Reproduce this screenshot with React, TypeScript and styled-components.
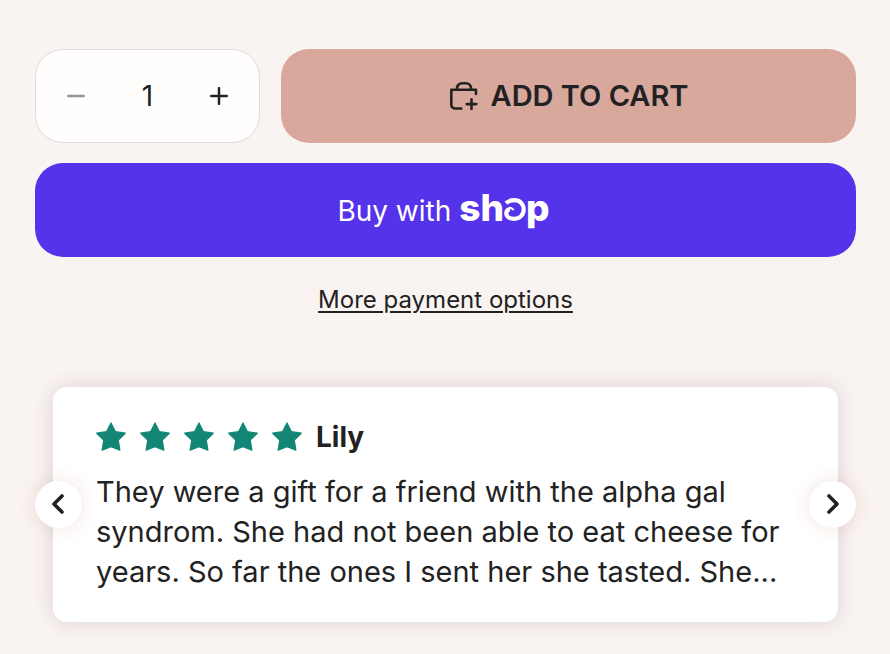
import React, { useState } from "react";
import styled, { createGlobalStyle } from "styled-components";

const ink = "#222222";

const GlobalStyle = createGlobalStyle`
  *, *::before, *::after { box-sizing: border-box; }
  body {
    margin: 0;
    background: #f9f3f1;
    color: ${ink};
    font-family: Inter, "Liberation Sans", sans-serif;
  }
  button, input { font: inherit; color: inherit; }
  button { border: 0; padding: 0; background: none; cursor: pointer; }
`;

const Page = styled.main`
  display: flex;
  flex-direction: column;
  padding: 49px 34px 32px 35px;
`;

const PurchaseForm = styled.form`
  display: flex;
  flex-wrap: wrap;
  gap: 20px 21px;
`;

const Quantity = styled.div`
  display: flex;
  align-items: center;
  width: 225px;
  height: 94px;
  border: 1px solid #dedadd;
  border-radius: 28px;
  background: #fffefd;
`;

const StepButton = styled.button`
  display: grid;
  place-items: center;
  flex: 0 0 80px;
  height: 100%;
  &:disabled { color: #999696; cursor: default; }
`;

const QuantityInput = styled.input`
  flex: 1;
  min-width: 0;
  border: 0;
  padding: 0;
  background: none;
  text-align: center;
  font-size: 28px;
  outline: none;
`;

const ActionButton = styled.button<{ $tone: "cart" | "shop" }>`
  display: flex;
  align-items: center;
  justify-content: center;
  flex: 1 0 ${(p) => (p.$tone === "shop" ? "100%" : "0")};
  height: 94px;
  gap: ${(p) => (p.$tone === "shop" ? "8px" : "12px")};
  padding-right: ${(p) => (p.$tone === "shop" ? "4px" : "0")};
  border-radius: 28px;
  background: ${(p) => (p.$tone === "shop" ? "#5433eb" : "#d9a89d")};
  color: ${(p) => (p.$tone === "shop" ? "#ffffff" : ink)};
  font-size: ${(p) => (p.$tone === "shop" ? "28px" : "29px")};
  font-weight: ${(p) => (p.$tone === "shop" ? 400 : 600)};
  line-height: 36px;
  white-space: nowrap;
`;

const ShopLabel = styled.span`
  line-height: 36px;
  padding-top: 2px;
`;

const Wordmark = styled.span`
  display: flex;
  align-items: baseline;
  padding-bottom: 5px;
  font-size: 37px;
  line-height: 44px;
  font-weight: 800;
`;

const MoreOptions = styled.a`
  align-self: center;
  margin-top: 27px;
  color: ${ink};
  font-size: 24px;
  line-height: 32px;
  text-decoration: underline;
  text-decoration-thickness: 2px;
  text-underline-offset: 3px;
`;

const Carousel = styled.section`
  position: relative;
  margin-top: 71px;
  padding: 0 18px;
`;

const ReviewCard = styled.article`
  padding: 32px 43px 30px;
  border-radius: 14px;
  background: #ffffff;
  box-shadow: 0 0 20px rgba(70, 45, 80, 0.16);
`;

const ReviewHeader = styled.header`
  display: flex;
  align-items: center;
  gap: 14px;
  height: 36px;
`;

const Stars = styled.div`
  display: flex;
  gap: 14px;
`;

const Reviewer = styled.h3`
  margin: 0;
  font-size: 28px;
  line-height: 36px;
  font-weight: 700;
`;

const ReviewText = styled.p`
  margin: 17px 0 0;
  font-size: 29px;
  line-height: 40px;
`;

const ReviewLine = styled.span`
  display: block;
`;

const ArrowButton = styled.button<{ $side: "left" | "right" }>`
  position: absolute;
  top: 50%;
  ${(p) => p.$side}: 0;
  display: grid;
  place-items: center;
  width: 47px;
  height: 47px;
  margin-top: -24px;
  border-radius: 50%;
  background: #ffffff;
  box-shadow: 0 0 18px rgba(170, 80, 50, 0.16);
`;

const MinusIcon = () => (
  <svg width="18" height="18" viewBox="0 0 18 18" fill="none" stroke="currentColor" strokeWidth="2.5" strokeLinecap="round" aria-hidden="true">
    <path d="M1.2 9h15.6" />
  </svg>
);

const PlusIcon = () => (
  <svg width="18" height="18" viewBox="0 0 18 18" fill="none" stroke="currentColor" strokeWidth="2.5" strokeLinecap="round" aria-hidden="true">
    <path d="M1.2 9h15.6M9 1.2v15.6" />
  </svg>
);

const BagIcon = () => (
  <svg width="30" height="30" viewBox="0 0 30 30" fill="none" stroke="currentColor" strokeWidth="2.6" strokeLinecap="round" strokeLinejoin="round" aria-hidden="true">
    <path d="M27 13V8.8H2.3v14.7a4 4 0 0 0 4 4h6" />
    <path d="M8 8.8V7.3a5 5 0 0 1 5-5h4a5 5 0 0 1 5 5v1.5" />
    <path d="M22.5 18.3v9.6M17.7 23.1h9.6" />
  </svg>
);

const SwirlIcon = () => (
  <svg width="22" height="23" viewBox="0 0 22 23" fill="none" stroke="currentColor" aria-hidden="true">
    <path d="M2 5.2C4.200 3.100 7 2.200 10.400 2.200c5.600 0 9.300 4 9.300 9.300s-3.900 9.300-9.400 9.300c-4.800 0-8-2.300-8-5.600 0-2.500 1.600-4 3.800-4" strokeWidth="4.200" />
    <path d="M5.500 9.500c2 .2 3 1.300 4.300 2.500" strokeWidth="2" />
  </svg>
);

const StarIcon = () => (
  <svg width="30" height="30" viewBox="0 0 30 30" fill="#148676" stroke="#148676" strokeWidth="1.2" strokeLinejoin="round" aria-hidden="true">
    <path d="M15 0.900l4.500 8.800 9.800 1.500-7 6.900 1.600 10.200L15 24.600l-8.900 3.700L7.700 18.100.700 11.200l9.800-1.500z" />
  </svg>
);

const ChevronIcon = ({ d }: { d: string }) => (
  <svg width="24" height="24" viewBox="0 0 24 24" fill="none" stroke={ink} strokeWidth="3.6" strokeLinecap="round" strokeLinejoin="round" aria-hidden="true">
    <path d={d} />
  </svg>
);

const reviewLines = [
  "They were a gift for a friend with the alpha gal",
  "syndrom. She had not been able to eat cheese for",
  "years. So far the ones I sent her she tasted. She...",
];

export default function App() {
  const [quantity, setQuantity] = useState(1);

  return (
    <>
      <GlobalStyle />
      <Page>
        <PurchaseForm onSubmit={(e) => e.preventDefault()}>
          <Quantity>
            <StepButton type="button" aria-label="Decrease quantity" disabled={quantity <= 1} onClick={() => setQuantity(quantity - 1)}>
              <MinusIcon />
            </StepButton>
            <QuantityInput
              aria-label="Quantity"
              inputMode="numeric"
              value={quantity}
              onChange={(e) => setQuantity(Math.max(1, Number(e.target.value) || 1))}
            />
            <StepButton type="button" aria-label="Increase quantity" onClick={() => setQuantity(quantity + 1)}>
              <PlusIcon />
            </StepButton>
          </Quantity>
          <ActionButton type="submit" $tone="cart">
            <BagIcon />
            ADD TO CART
          </ActionButton>
          <ActionButton type="button" $tone="shop" aria-label="Buy with shop">
            <ShopLabel>Buy with</ShopLabel>
            <Wordmark>
              sh
              <SwirlIcon />
              p
            </Wordmark>
          </ActionButton>
        </PurchaseForm>
        <MoreOptions href="#payment">More payment options</MoreOptions>
        <Carousel aria-label="Customer reviews">
          <ReviewCard>
            <ReviewHeader>
              <Stars role="img" aria-label="5 out of 5 stars">
                {[1, 2, 3, 4, 5].map((n) => (
                  <StarIcon key={n} />
                ))}
              </Stars>
              <Reviewer>Lily</Reviewer>
            </ReviewHeader>
            <ReviewText>
              {reviewLines.map((line) => (
                <ReviewLine key={line}>{line} </ReviewLine>
              ))}
            </ReviewText>
          </ReviewCard>
          <ArrowButton type="button" $side="left" aria-label="Previous review">
            <ChevronIcon d="M15 4l-8 8 8 8" />
          </ArrowButton>
          <ArrowButton type="button" $side="right" aria-label="Next review">
            <ChevronIcon d="M8 4l8 8-8 8" />
          </ArrowButton>
        </Carousel>
      </Page>
    </>
  );
}
